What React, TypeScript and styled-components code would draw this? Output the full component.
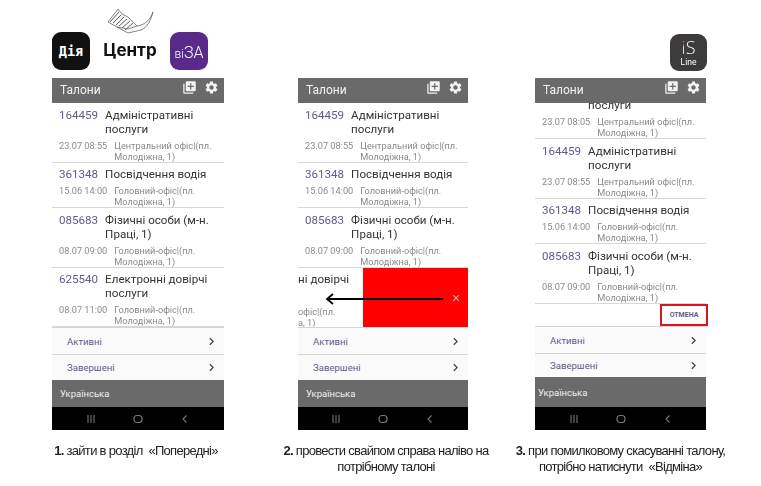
import styled, { createGlobalStyle } from "styled-components";
import { MdLibraryAdd, MdSettings, MdChevronRight } from "react-icons/md";

const GlobalStyle = createGlobalStyle`
    html, body {
        margin: 0;
        padding: 0;
        background: #fff;
        font-family: Roboto, "Liberation Sans", sans-serif;
    }
`;

type TicketData = { code: string; title: string; time: string; place: string };

const first: TicketData = { code: "164459", title: "Адміністративні послуги", time: "23.07 08:55", place: "Центральний офіс|(пл. Молодіжна, 1)" };
const second: TicketData = { code: "361348", title: "Посвідчення водія", time: "15.06 14:00", place: "Головний-офіс|(пл. Молодіжна, 1)" };
const third: TicketData = { code: "085683", title: "Фізичні особи (м-н. Праці, 1)", time: "08.07 09:00", place: "Головний-офіс|(пл. Молодіжна, 1)" };
const fourth: TicketData = { code: "625540", title: "Електронні довірчі послуги", time: "08.07 11:00", place: "Головний-офіс|(пл. Молодіжна, 1)" };

const Ticket = ({ code, title, time, place }: TicketData) => (
    <TicketRow>
        <TicketHead>
            <TicketCode>{code}</TicketCode>
            <TicketTitle>{title}</TicketTitle>
        </TicketHead>
        <TicketMeta>
            <TicketTime>{time}</TicketTime>
            <TicketPlace>{place}</TicketPlace>
        </TicketMeta>
    </TicketRow>
);

const Fish = () => (
    <svg width="47" height="26" viewBox="0 0 47 26" fill="none" stroke="#555" strokeWidth="0.7">
        <path d="M1 14 L11 1 L15 6 L21 9 L30 18 C38 17 43 12 46 4 C44 12 40 20 34 22 L21 25 L10 19 Z" fill="#f7f7f7" />
        <path d="M3 14 L12 4 M6 15 L14 7 M9 17 L17 9 M12 18 L20 11 M15 20 L23 13 M18 22 L26 15" strokeWidth="0.9" />
        <path d="M10 19 L21 21 L30 18" />
    </svg>
);

const Header = () => (
    <TopBar>
        <TopTitle>Талони</TopTitle>
        <TopIcons>
            <MdLibraryAdd size={15} />
            <MdSettings size={15} />
        </TopIcons>
    </TopBar>
);

const Footer = ({ compact }: { compact?: boolean }) => (
    <>
        <Section $height={27}>
            <SectionLabel>Активні</SectionLabel>
            <MdChevronRight size={15} />
        </Section>
        <Section $height={compact ? 24 : 26}>
            <SectionLabel>Завершені</SectionLabel>
            <MdChevronRight size={15} />
        </Section>
        <LangBar $short={compact}>Українська</LangBar>
        <NavBar>
            <svg width="10" height="10" viewBox="0 0 10 10" stroke="#777" strokeWidth="1.1">
                <path d="M2 1v8M5 1v8M8 1v8" />
            </svg>
            <svg width="10" height="10" viewBox="0 0 10 10" fill="none" stroke="#777" strokeWidth="1.2">
                <rect x="1" y="1.5" width="8" height="7" rx="3" />
            </svg>
            <svg width="10" height="10" viewBox="0 0 10 10" fill="none" stroke="#777" strokeWidth="1.1">
                <path d="M6.5 1.5 L3 5 L6.5 8.5" />
            </svg>
        </NavBar>
    </>
);

export default function App() {
    return (
        <>
            <GlobalStyle />
            <Page>
                <Column $width={172}>
                    <LogoRow>
                        <DiiaLogo>Дія</DiiaLogo>
                        <CenterMark>
                            <Fish />
                            <CenterWord>Центр</CenterWord>
                        </CenterMark>
                        <VizaLogo><small>ві</small>ЗА</VizaLogo>
                    </LogoRow>
                    <Phone>
                        <Header />
                        <TicketList $height={224}>
                            <Ticket {...first} />
                            <Ticket {...second} />
                            <Ticket {...third} />
                            <Ticket {...fourth} />
                        </TicketList>
                        <Footer />
                    </Phone>
                    <Caption $shift={-2}>
                        <b>1.</b> зайти в розділ&nbsp; «Попередні»
                    </Caption>
                </Column>

                <Column $width={170} $offset={74}>
                    <LogoRow />
                    <Phone>
                        <Header />
                        <TicketList $height={224}>
                            <Ticket {...first} />
                            <Ticket {...second} />
                            <Ticket {...third} />
                            <SwipedRow>
                                <SwipedText>
                                    <SwipedTitle>ні довірчі</SwipedTitle>
                                    <SwipedPlace>офіс|(пл.<br />а, 1)</SwipedPlace>
                                </SwipedText>
                                <RedAction>×</RedAction>
                                <SwipeArrow width="118" height="12" viewBox="0 0 118 12" fill="none" stroke="#000">
                                    <path d="M118 6H2" strokeWidth="1.8" />
                                    <path d="M8 1 L2 6 L8 11" strokeWidth="1.8" />
                                </SwipeArrow>
                            </SwipedRow>
                        </TicketList>
                        <Footer />
                    </Phone>
                    <Caption $shift={3}>
                        <b>2.</b> провести свайпом справа наліво на<br />потрібному талоні
                    </Caption>
                </Column>

                <Column $width={171} $offset={67}>
                    <LogoRow $end>
                        <IsLineLogo>
                            <IsMark><i>i</i>S</IsMark>
                            <IsLine>Line</IsLine>
                        </IsLineLogo>
                    </LogoRow>
                    <Phone>
                        <Header />
                        <TicketList $height={201}>
                            <Scrolled>
                                <Ticket {...first} time="23.07 08:05" />
                                <Ticket {...first} />
                                <Ticket {...second} />
                                <Ticket {...third} />
                            </Scrolled>
                        </TicketList>
                        <UndoRow>
                            <UndoButton>ОТМЕНА</UndoButton>
                        </UndoRow>
                        <Footer compact />
                    </Phone>
                    <Caption>
                        <b>3.</b> при помилковому скасуванні талону,<br />потрібно натиснути&nbsp; «Відміна»
                    </Caption>
                </Column>
            </Page>
        </>
    );
}

const Page = styled.div`
    display: flex;
    align-items: flex-start;
    width: 761px;
    height: 486px;
    padding-left: 52px;
    box-sizing: border-box;
    overflow: hidden;
    filter: blur(0.3px);
`;

const Column = styled.div<{ $width: number; $offset?: number }>`
    display: flex;
    flex-direction: column;
    width: ${(p) => p.$width}px;
    margin-left: ${(p) => p.$offset ?? 0}px;
    flex: none;
`;

const LogoRow = styled.div<{ $end?: boolean }>`
    display: flex;
    align-items: flex-end;
    justify-content: ${(p) => (p.$end ? "flex-end" : "space-between")};
    height: 78px;
    padding-bottom: ${(p) => (p.$end ? "7px" : "8px")};
    padding-right: ${(p) => (p.$end ? "0" : "16px")};
    box-sizing: border-box;
`;

const AppLogo = styled.div`
    width: 38px;
    height: 38px;
    border-radius: 9px;
    display: flex;
    align-items: center;
    justify-content: center;
    color: #fff;
`;

const DiiaLogo = styled(AppLogo)`
    background: #111;
    font-family: "DejaVu Sans Mono", monospace;
    font-size: 13.5px;
    font-weight: 700;
`;

const VizaLogo = styled(AppLogo)`
    background: #5a2a8a;
    align-items: baseline;
    padding-top: 11px;
    height: 27px;
    font-size: 16px;
    line-height: 19px;
    font-weight: 300;

    small {
        font-size: 12px;
    }
`;

const CenterMark = styled.div`
    display: flex;
    flex-direction: column;
    align-items: center;
    margin-bottom: 11px;
    gap: 7px;
`;

const CenterWord = styled.div`
    font-family: Inter, sans-serif;
    font-weight: 700;
    font-size: 17px;
    line-height: 18px;
    color: #111;
`;

const IsLineLogo = styled(AppLogo)`
    background: #3c3c3c;
    flex-direction: column;
    width: 37px;
    height: 37px;
    margin-right: -1px;
`;

const IsMark = styled.div`
    font-family: "Open Sans", sans-serif;
    font-size: 18px;
    line-height: 19px;
    font-weight: 300;

    i {
        font-style: normal;
        background: linear-gradient(#e07b39 45%, #f2f2f2 45%);
        background-clip: text;
        -webkit-background-clip: text;
        -webkit-text-fill-color: transparent;
    }
`;

const IsLine = styled.div`
    font-size: 8.5px;
    line-height: 10px;
`;

const Phone = styled.div`
    display: flex;
    flex-direction: column;
    height: 352px;
`;

const TopBar = styled.div`
    flex: none;
    height: 25px;
    background: #6a6a6a;
    color: #f2f2f2;
    display: flex;
    align-items: center;
    justify-content: space-between;
    padding: 0 5px 0 8px;
`;

const TopTitle = styled.div`
    font-size: 12px;
    margin-top: -2px;
`;

const TopIcons = styled.div`
    display: flex;
    gap: 7px;
    margin-bottom: 7px;
`;

const TicketList = styled.div<{ $height: number }>`
    flex: none;
    height: ${(p) => p.$height}px;
    overflow: hidden;
    display: flex;
    flex-direction: column;
`;

const Scrolled = styled.div`
    flex: none;
    margin-top: -23.5px;
`;

const TicketRow = styled.div`
    flex: none;
    padding: 4.5px 4px 0 7px;
    border-bottom: 1px solid #d8d8d8;
`;

const TicketHead = styled.div`
    display: flex;
    gap: 7px;
    font-size: 11.6px;
    line-height: 14px;
`;

const TicketCode = styled.div`
    color: #5f5a8c;
`;

const TicketTitle = styled.div`
    color: #333;
`;

const TicketMeta = styled.div`
    display: flex;
    gap: 7px;
    margin-top: 4px;
    font-size: 9.2px;
    line-height: 11px;
    color: #8a8a8a;
`;

const TicketTime = styled.div`
    flex: none;
`;

const TicketPlace = styled.div``;

const SwipedRow = styled.div`
    position: relative;
    display: flex;
    flex: none;
    height: 59px;
    border-bottom: 1px solid #d8d8d8;
`;

const SwipedText = styled.div`
    width: 65px;
    flex: none;
    overflow: hidden;
    padding-top: 4.5px;
`;

const SwipedTitle = styled.div`
    font-size: 11.6px;
    line-height: 14px;
    color: #333;
    white-space: nowrap;
`;

const SwipedPlace = styled.div`
    margin-top: 19.5px;
    font-size: 9.2px;
    line-height: 11px;
    color: #8a8a8a;
`;

const RedAction = styled.div`
    flex: 1;
    background: #ff0000;
    color: #ffdcdc;
    font-size: 15px;
    font-weight: 300;
    display: flex;
    align-items: center;
    justify-content: flex-end;
    padding-right: 8px;
`;

const SwipeArrow = styled.svg`
    position: absolute;
    left: 27px;
    top: 25px;
`;

const UndoRow = styled.div`
    flex: none;
    height: 22px;
    display: flex;
    justify-content: flex-end;
    align-items: flex-start;
    position: relative;
    z-index: 1;
`;

const UndoButton = styled.div`
    width: 48px;
    height: 22px;
    margin-right: -2px;
    box-sizing: border-box;
    border: 2px solid #d7141f;
    background: #fff;
    color: #5f5a8c;
    font-size: 7px;
    font-weight: 700;
    display: flex;
    align-items: center;
    justify-content: center;
`;

const Section = styled.div<{ $height: number }>`
    flex: none;
    box-sizing: border-box;
    height: ${(p) => p.$height}px;
    background: #fafafa;
    border-top: 1px solid #d4d4d4;
    display: flex;
    align-items: center;
    justify-content: space-between;
    padding: 0 5px 0 15px;
    color: #444;
`;

const SectionLabel = styled.div`
    font-size: 9.6px;
    color: #5f5a8c;
`;

const LangBar = styled.div<{ $short?: boolean }>`
    flex: none;
    height: ${(p) => (p.$short ? "30px" : "27px")};
    background: #6a6a6a;
    color: #f0f0f0;
    font-size: 9.5px;
    display: flex;
    align-items: center;
    padding-left: ${(p) => (p.$short ? "3px" : "8px")};
`;

const NavBar = styled.div`
    flex: 1;
    background: #000;
    display: flex;
    align-items: center;
    justify-content: center;
    gap: 37px;
`;

const Caption = styled.div<{ $shift?: number }>`
    margin: 13px ${(p) => -30 - (p.$shift ?? 0)}px 0 ${(p) => -30 + (p.$shift ?? 0)}px;
    text-align: center;
    font-family: "Liberation Sans", Arial, sans-serif;
    font-size: 13px;
    line-height: 16px;
    letter-spacing: -0.7px;
    color: #222;
    white-space: nowrap;
`;
